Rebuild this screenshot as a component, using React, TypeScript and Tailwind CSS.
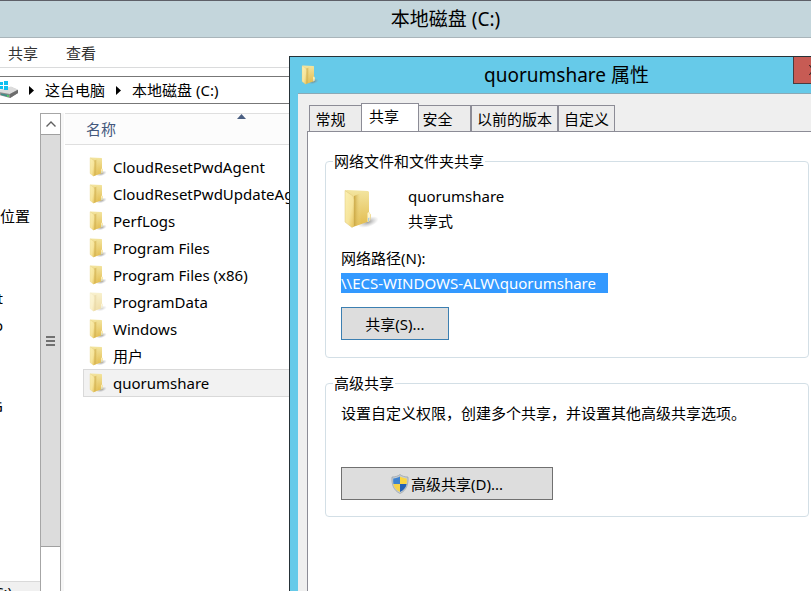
import React from "react";

const files = [
  { name: "CloudResetPwdAgent" },
  { name: "CloudResetPwdUpdateAgent" },
  { name: "PerfLogs" },
  { name: "Program Files" },
  { name: "Program Files (x86)" },
  { name: "ProgramData", hidden: true },
  { name: "Windows" },
  { name: "用户" },
  { name: "quorumshare", selected: true },
];

function FolderIcon({ className = "" }: { className?: string }) {
  return (
    <svg viewBox="0 0 36 40" className={className} aria-hidden="true">
      <defs>
        <linearGradient id="folderFront" x1="0" y1="0" x2="1" y2="1">
          <stop offset="0" stopColor="#fbf0b4" />
          <stop offset="0.6" stopColor="#f6e49a" />
          <stop offset="1" stopColor="#e6c257" />
        </linearGradient>
        <linearGradient id="folderBack" x1="0" y1="0" x2="0" y2="1">
          <stop offset="0" stopColor="#f3e5a0" />
          <stop offset="1" stopColor="#e2bb4c" />
        </linearGradient>
        <linearGradient id="folderFold" x1="0" y1="0" x2="1" y2="0">
          <stop offset="0" stopColor="#c9a540" />
          <stop offset="1" stopColor="#f3df90" stopOpacity="0" />
        </linearGradient>
        <radialGradient id="folderShadow">
          <stop offset="0" stopColor="#666" stopOpacity="0.65" />
          <stop offset="1" stopColor="#999" stopOpacity="0" />
        </radialGradient>
      </defs>
      <ellipse cx="25" cy="33" rx="11" ry="5" fill="url(#folderShadow)" transform="rotate(-18 25 33)" />
      <path d="M2 1.500 L4 1 L25 2 L26 3 L26 23 L28 26 L27 32 L10 38 Z" fill="url(#folderBack)" />
      <path d="M11 7 L18 4 L18 35 L11 37 Z" fill="url(#folderFold)" />
      <path d="M2 1.500 L10 7 L11 11 L10.500 37.500 L9 38.500 L2 33 Z" fill="url(#folderFront)" stroke="#dcc476" strokeWidth="0.500" />
      <path d="M24.500 24 L26 23 L27.500 26 L26.500 32 L24.500 33 Z" fill="#fff6cc" />
      <path d="M25 29 L26.500 28.500 L26 32 L25 32.500 Z" fill="#a9cbe4" />
    </svg>
  );
}

function DriveIcon() {
  return (
    <svg viewBox="1 0 18 18" className="h-[18px] w-[18px] shrink-0" aria-hidden="true">
      <path d="M0 10 L12 6 L19 9 L19 12 L11 17 L0 14 Z" fill="#8b8b8b" />
      <path d="M0 9 L12 5.500 L19 8.500 L11 13 L0 11 Z" fill="#dcdcdc" />
      <path d="M11 13 L19 9 L19 12 L11 17 Z" fill="#6c6c6c" />
      <path d="M2 12.500 L10 14 L10 16 L2 14 Z" fill="#3d8f86" />
      <path d="M8 14 L10 14.500 L10 16 L8 15.500 Z" fill="#5fd35f" />
      <path d="M1 1h3v3H1zM5 0h4v4H5zM1 5h3v3H1zM5 5h4v4H5z" fill="#10bff0" />
    </svg>
  );
}

function ShieldIcon() {
  return (
    <svg viewBox="0 0 18 20" className="h-5 w-[18px]" aria-hidden="true">
      <path d="M9 0.5 C11 2.2 14 3 17 3 C17.6 10 15.5 16.5 9 19.5 C2.5 16.5 0.4 10 1 3 C4 3 7 2.2 9 0.5Z" fill="#c5ccd2" stroke="#8f989f" strokeWidth="0.6" />
      <path d="M9 2.5 V10 H2.4 C2.1 8 2.1 6.500 2.300 4.500 C5 4.300 7 3.700 9 2.500Z" fill="#3f82cf" />
      <path d="M9 2.500 C11 3.700 13 4.300 15.700 4.500 C15.900 6.500 15.900 8 15.600 10 H9Z" fill="#fbd640" />
      <path d="M9 10 V18 C5 16 3 13.500 2.400 10Z" fill="#f7d34a" />
      <path d="M9 10 H15.600 C15 13.500 13 16 9 18Z" fill="#2461b4" />
    </svg>
  );
}

function Crumb({ children }: { children: React.ReactNode }) {
  return (
    <>
      <svg viewBox="0 0 5 9" className="h-[9px] w-[5px] shrink-0" aria-hidden="true">
        <path d="M0 0 L5 4.5 L0 9Z" fill="#000" />
      </svg>
      <button className="whitespace-nowrap">{children}</button>
    </>
  );
}

/* Tail of a tree entry whose start is scrolled out of the pane */
function TreeTail({ children }: { children: React.ReactNode }) {
  return <div className="flex h-[27px] w-[3px] items-center justify-end overflow-hidden">{children}</div>;
}

function Explorer() {
  return (
    <main className="flex min-h-screen flex-col border-t border-[#5e6068]">
      <header className="flex h-[37px] items-center justify-center border-b border-[#a9b5ba] bg-[#c4d6dc] pl-20 text-[19px]">
        <h1>本地磁盘 (C:)</h1>
      </header>
      <nav className="flex h-[30px] items-center gap-7 border-b border-[#dadbdc] px-2 text-[#333]">
        <button>共享</button>
        <button>查看</button>
      </nav>
      <div className="mt-2 flex h-7 items-center gap-[11px] border-y border-[#777]">
        <DriveIcon />
        <Crumb>这台电脑</Crumb>
        <Crumb>本地磁盘 (C:)</Crumb>
      </div>
      <div className="mt-[9px] flex grow">
        <aside className="flex w-10 flex-col whitespace-nowrap">
          <div className="mt-[90px] mb-[54px] h-[27px] leading-[27px]">位置</div>
          <TreeTail>t</TreeTail>
          <TreeTail>o</TreeTail>
          <div className="h-[54px]" />
          <TreeTail>G</TreeTail>
          <div className="mt-auto flex h-[10px] overflow-hidden border-t border-[#d9d9d9] bg-[#f0f0f0] leading-5">
            <div className="flex w-3 justify-end overflow-hidden">(C:)</div>
          </div>
        </aside>
        <div className="flex w-[21px] flex-col border-x border-[#a6a6a6]">
          <button aria-label="向上滚动" className="flex h-[21px] items-center justify-center border-t border-[#a6a6a6]">
            <svg viewBox="0 0 10 6" className="h-[6px] w-[10px]" aria-hidden="true">
              <path d="M0.500 5.500 L5 1 L9.500 5.500" fill="none" stroke="#606060" strokeWidth="1.400" />
            </svg>
          </button>
          <div className="flex h-[413px] flex-col items-center justify-center gap-[2px] border-y border-[#a0a0a0] bg-[#dcdcdc]">
            <span className="h-[2px] w-[9px] bg-[#707070]" />
            <span className="h-[2px] w-[9px] bg-[#707070]" />
            <span className="h-[2px] w-[9px] bg-[#707070]" />
          </div>
        </div>
        <section className="flex grow border-l-[3px] border-[#f7f7f7] pl-px">
          <div className="grow">
            <div className="relative flex h-8 items-center border-y border-[#dfdfdf] bg-[#fcfcfc] pl-[21px] text-[#44587c]">
              名称
              <svg viewBox="0 0 9 5" className="absolute top-0 left-[172px] h-[5px] w-[9px]" aria-hidden="true">
                <path d="M0 5 L4.500 0 L9 5Z" fill="#4b5f82" />
              </svg>
            </div>
            <ul className="mt-2 ml-[18px]">
              {files.map((f) => (
                <li
                  key={f.name}
                  className={
                    f.selected
                      ? "flex h-7 items-center gap-[5px] border border-[#d9d9d9] bg-[#f2f2f2] pl-1"
                      : "flex h-[27px] items-center gap-[5px] pl-[5px]"
                  }
                >
                  <FolderIcon className={f.hidden ? "h-5 w-5 opacity-50" : "h-5 w-5"} />
                  {f.name}
                </li>
              ))}
            </ul>
          </div>
        </section>
      </div>
    </main>
  );
}

const tabBase = "h-[26px] border border-b-0 border-[#8c8c96] bg-[#ececec] whitespace-nowrap";

function PropertiesDialog() {
  return (
    <section
      role="dialog"
      aria-labelledby="dialog-title"
      className="absolute top-14 right-0 bottom-0 left-[289px] flex flex-col overflow-hidden border-t border-l border-[#263238] bg-[#66cae9]"
    >
      <header className="flex h-9 shrink-0 items-center pl-[10px]">
        <FolderIcon className="h-5 w-5" />
        <h2 id="dialog-title" className="grow pl-5 text-center text-[19px]">
          quorumshare 属性
        </h2>
        <button aria-label="关闭" className="flex h-[27px] w-[18px] items-center justify-end self-start overflow-hidden border-b border-l border-[#4b3a3d] bg-[#c75b54]">
          <svg viewBox="0 0 2 10" className="h-[10px] w-[2px]" aria-hidden="true">
            <path d="M0 0h1l1 2v1zM0 10h1l1-2v-1z" fill="#111" />
          </svg>
        </button>
      </header>
      <div className="ml-2 flex grow flex-col border-t border-[#8ba9b6] bg-[#efefef] pl-[9px]">
        <div role="tablist" className="mt-[9px] flex items-end pl-[2px]">
          <button role="tab" className={`${tabBase} w-[52px] border-r-0 pr-[10px]`}>常规</button>
          <button role="tab" aria-selected="true" className="-mb-px h-[29px] w-[58px] border border-b-0 border-[#8c8c96] bg-white pr-3 pb-1">
            共享
          </button>
          <button role="tab" className={`${tabBase} w-[52px] border-l-0 pr-[14px]`}>安全</button>
          <button role="tab" className={`${tabBase} w-[87px]`}>以前的版本</button>
          <button role="tab" className={`${tabBase} w-[57px]`}>自定义</button>
        </div>
        <div role="tabpanel" className="flex grow flex-col gap-[14px] border-t border-l border-[#8c8c96] bg-white pt-[18px] pr-[2px] pl-[17px]">
          <fieldset className="h-[208px] rounded border border-[#d3dfe6] px-[15px]">
            <legend className="-ml-2 px-[1px] leading-[22px]">网络文件和文件夹共享</legend>
            <div className="flex items-center gap-[27px] pt-3">
              <FolderIcon className="h-10 w-10" />
              <div className="leading-[25px]">
                <p>quorumshare</p>
                <p>共享式</p>
              </div>
            </div>
            <p className="mt-3 leading-[25px]">网络路径(N):</p>
            <p className="mt-[2px] w-[267px] bg-[#3399ff] leading-5 whitespace-nowrap text-white">\\ECS-WINDOWS-ALW\quorumshare</p>
            <button className="mt-[14px] h-[33px] w-[108px] border border-[#3c7fb1] bg-[#dddddd]">共享(S)...</button>
          </fieldset>
          <fieldset className="h-[145px] rounded border border-[#d3dfe6] px-[15px]">
            <legend className="-ml-2 px-[1px] leading-[22px]">高级共享</legend>
            <p className="mt-[7px] leading-[25px] whitespace-nowrap">设置自定义权限，创建多个共享，并设置其他高级共享选项。</p>
            <button className="mt-[41px] flex h-[33px] w-[212px] items-center justify-center gap-[2px] border border-[#707070] bg-[#dddddd]">
              <ShieldIcon />
              高级共享(D)...
            </button>
          </fieldset>
        </div>
      </div>
    </section>
  );
}

export default function App() {
  return (
    <div className="relative min-h-screen overflow-hidden bg-white font-['Noto_Sans','Noto_Sans_CJK_SC',sans-serif] text-[15px] leading-5 text-black">
      <Explorer />
      <PropertiesDialog />
    </div>
  );
}
